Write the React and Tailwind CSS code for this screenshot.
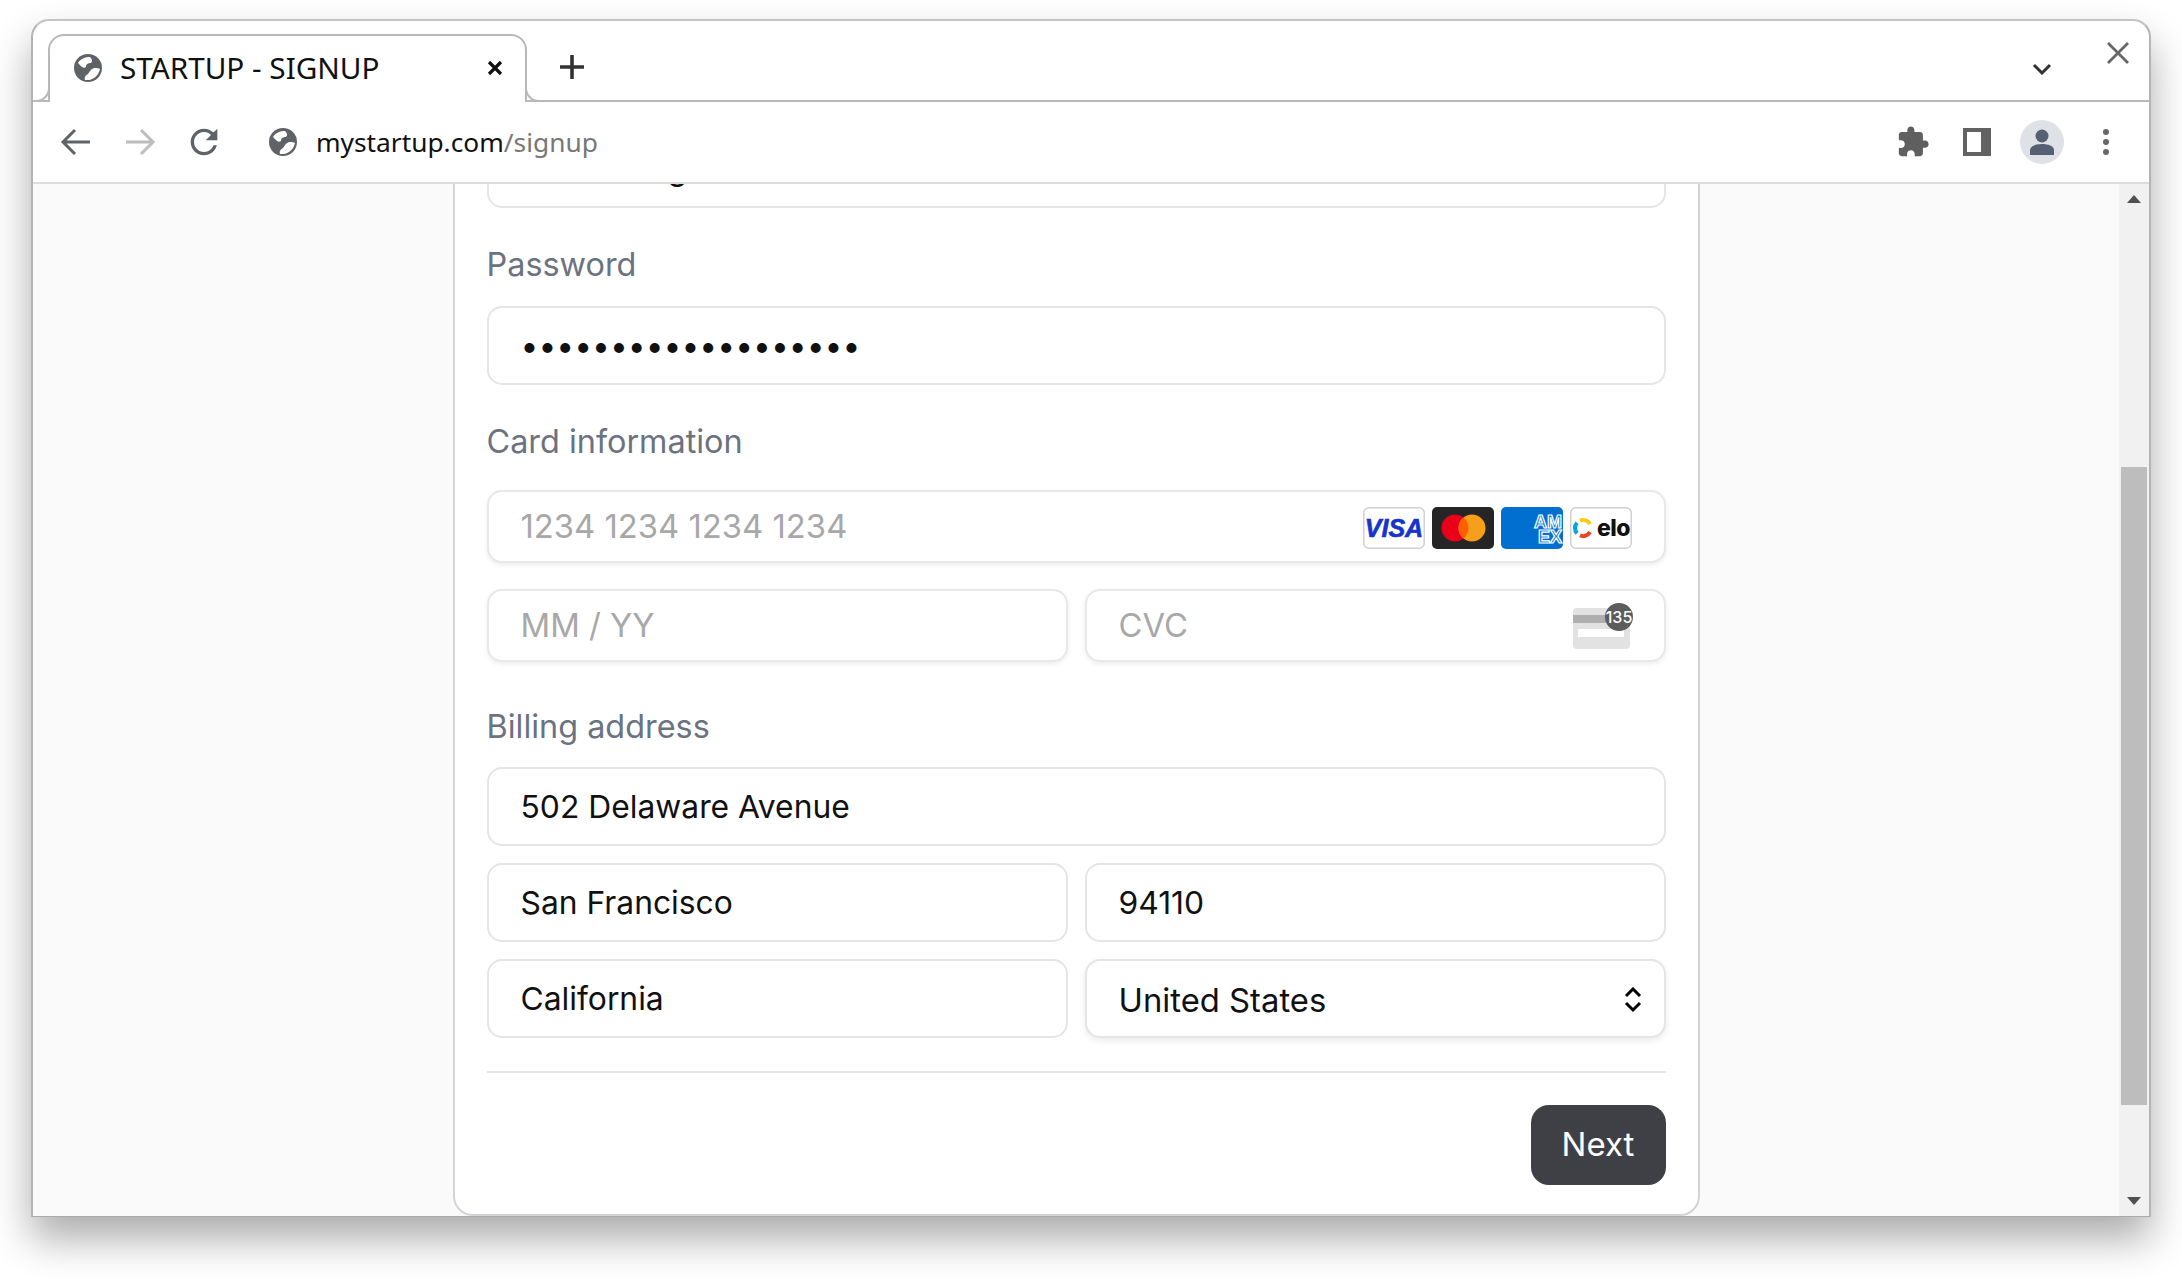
import React from 'react';

const inputClass =
  'block w-full h-[79px] px-[32px] bg-white border-2 border-[#e5e5e5] rounded-[15px] text-[31.8px] text-[#111] outline-none';
const stripeClass =
  'block w-full h-[73px] px-[32px] pb-[2px] bg-white border-2 border-[#e8e8e8] rounded-[15px] text-[32.8px] text-[#111] placeholder:text-[#a8a8a8] outline-none shadow-[0_2px_5px_rgba(0,0,0,0.08)]';
const labelClass = 'block h-[44px] leading-[44px] text-[32.4px] text-[#6b7280]';

const Globe = () => (
  <svg width="28" height="28" viewBox="0 0 28 28">
    <circle cx="14" cy="14" r="14" fill="#5f6368" />
    <path d="M4 9 C7 4 12 3 16 3 C18 5 19 7 17 9 C14 9 12 10 12 13 C9 15 7 12 4 9 Z" fill="#fff" />
    <path d="M11 26 C10 23 12 21 14 20 C16 17 17 15 20 14 C23 14 25 14 26 15 C25 20 21 25 15 26 C13 26 12 26 11 26 Z" fill="#fff" />
  </svg>
);

const VisaIcon = () => (
  <svg width="62" height="42" viewBox="0 0 62 42">
    <rect x="0.75" y="0.75" width="60.5" height="40.5" rx="5" fill="#fff" stroke="#d0d0d0" strokeWidth="1.5" />
    <text x="31" y="30" textAnchor="middle" fontFamily="Liberation Sans, sans-serif" fontSize="25" fontWeight="700" fontStyle="italic" fill="#1434cb" stroke="#1434cb" strokeWidth="0.6">VISA</text>
  </svg>
);

const MasterIcon = () => (
  <svg width="62" height="42" viewBox="0 0 62 42">
    <rect width="62" height="42" rx="5" fill="#252525" />
    <circle cx="23" cy="21" r="13.5" fill="#eb001b" />
    <circle cx="40" cy="21" r="13.5" fill="#f79e1b" />
    <path d="M31.5 10.5 A13.5 13.5 0 0 1 31.5 31.5 A13.5 13.5 0 0 1 31.5 10.5 Z" fill="#ff5f00" />
  </svg>
);

const AmexIcon = () => (
  <svg width="62" height="42" viewBox="0 0 62 42">
    <rect width="62" height="42" rx="5" fill="#016fd0" />
    <text fontFamily="Liberation Sans, sans-serif" fontSize="18" fontWeight="700" fill="#016fd0" stroke="#fff" strokeWidth="1.2">
      <tspan x="33" y="21">AM</tspan>
      <tspan x="37" y="36">EX</tspan>
    </text>
  </svg>
);

const EloIcon = () => (
  <svg width="62" height="42" viewBox="0 0 62 42">
    <rect x="0.75" y="0.75" width="60.5" height="40.5" rx="5" fill="#fff" stroke="#d0d0d0" strokeWidth="1.5" />
    <path d="M7 15.7 A8 8 0 0 0 7 26.3" fill="none" stroke="#00a4e0" strokeWidth="4" />
    <path d="M10 13.6 A8 8 0 0 1 20 17" fill="none" stroke="#ffcb05" strokeWidth="4" />
    <path d="M20 25 A8 8 0 0 1 10 28.4" fill="none" stroke="#ef4123" strokeWidth="4" />
    <text x="27" y="29" fontFamily="Inter, sans-serif" fontSize="23" fontWeight="800" letterSpacing="-0.5" fill="#111">elo</text>
  </svg>
);

const CvcIcon = () => (
  <svg width="62" height="48" viewBox="0 0 62 48">
    <rect x="2" y="6" width="57" height="41" rx="4" fill="#e2e2e2" />
    <rect x="2" y="13" width="57" height="8" fill="#aeaeae" />
    <rect x="7" y="27" width="46" height="8" rx="1" fill="#fff" />
    <circle cx="48" cy="15" r="14" fill="#5c5c5c" />
    <text x="48" y="21" textAnchor="middle" fontFamily="Inter, sans-serif" fontSize="16" fontWeight="500" fill="#fff">135</text>
  </svg>
);

export default function App() {
  return (
    <div className="w-[2182px] h-[1279px] bg-white pl-[31px] pt-[19px] overflow-hidden font-['Inter',sans-serif]">
      <div className="w-[2120px] h-[1198px] flex flex-col bg-white border-2 border-b-[1.5px] border-[#c4c4c4] border-b-[#aaa] border-l-[#b4b4b4] border-r-[#b4b4b4] rounded-t-[18px] overflow-hidden shadow-[0_22px_40px_rgba(0,0,0,0.33)]">
        {/* tab strip */}
        <div className="h-[81px] shrink-0 flex items-end border-b-2 border-[#b8b8b8] pl-[15px] font-['Noto_Sans',sans-serif]">
          <div className="relative w-[479px] h-[68px] -mb-[2px] bg-white border-2 border-b-0 border-[#b8b8b8] rounded-t-[16px] flex items-center pl-[24px] pb-[2px]">
            <span className="absolute -left-[16px] bottom-0 w-[16px] h-[14px] border-b-2 border-r-2 border-[#b8b8b8] rounded-br-[14px]" />
            <span className="absolute -right-[16px] bottom-0 w-[16px] h-[14px] border-b-2 border-l-2 border-[#b8b8b8] rounded-bl-[14px]" />
            <Globe />
            <span className="ml-[18px] text-[29.7px] text-[#111] whitespace-nowrap">STARTUP - SIGNUP</span>
            <svg className="ml-auto mr-[22px]" width="16" height="16" viewBox="0 0 16 16">
              <path d="M2 2 L14 14 M14 2 L2 14" stroke="#111" strokeWidth="3.2" />
            </svg>
          </div>
          <svg className="ml-[32px] mb-[20px]" width="26" height="26" viewBox="0 0 26 26">
            <path d="M13 1 V25 M1 13 H25" stroke="#333" strokeWidth="3.6" />
          </svg>
          <div className="ml-auto flex items-center self-stretch">
            <svg className="mt-[16px]" width="20" height="12" viewBox="0 0 20 12">
              <path d="M2 2 L10 10 L18 2" fill="none" stroke="#333" strokeWidth="3" />
            </svg>
            <svg className="ml-[54px] mr-[19px] -mt-[16px]" width="24" height="24" viewBox="0 0 24 24">
              <path d="M2 2 L22 22 M22 2 L2 22" stroke="#666" strokeWidth="2.8" />
            </svg>
          </div>
        </div>

        {/* toolbar */}
        <div className="h-[82px] shrink-0 flex items-center border-b-2 border-[#dcdcdc] font-['Noto_Sans',sans-serif] pl-[27px] pr-[40px]">
          <svg width="32" height="28" viewBox="0 0 32 28">
            <path d="M30 14 H4 M15 2 L3 14 L15 26" fill="none" stroke="#5f6368" strokeWidth="3" />
          </svg>
          <svg className="ml-[32px]" width="32" height="28" viewBox="0 0 32 28">
            <path d="M2 14 H28 M17 2 L29 14 L17 26" fill="none" stroke="#bdbdbd" strokeWidth="3" />
          </svg>
          <svg className="ml-[28px]" width="40" height="40" viewBox="0 0 24 24">
            <path fill="#5f6368" d="M17.65 6.35A7.958 7.958 0 0 0 12 4c-4.42 0-7.99 3.58-7.99 8s3.57 8 7.99 8c3.73 0 6.84-2.55 7.73-6h-2.08A5.99 5.99 0 0 1 12 18c-3.31 0-6-2.69-6-6s2.69-6 6-6c1.66 0 3.14.69 4.22 1.78L13 11h7V4l-2.35 2.35z" />
          </svg>
          <span className="ml-[45px] flex"><Globe /></span>
          <span className="ml-[19px] mt-[2px] text-[26.3px] text-[#111] whitespace-nowrap">
            mystartup.com<span className="text-[#777]">/signup</span>
          </span>
          <div className="ml-auto flex items-center">
            <svg width="34" height="34" viewBox="0 0 24 24">
              <path fill="#5f5f5f" d="M20.5 11H19V7c0-1.1-.9-2-2-2h-4V3.5C13 2.12 11.88 1 10.5 1S8 2.12 8 3.5V5H4c-1.1 0-1.99.9-1.99 2v3.8H3.5c1.49 0 2.7 1.21 2.7 2.7s-1.21 2.7-2.7 2.7H2V20c0 1.1.9 2 2 2h3.8v-1.5c0-1.49 1.21-2.7 2.7-2.7 1.49 0 2.7 1.21 2.7 2.7V22H17c1.1 0 2-.9 2-2v-4h1.5c1.38 0 2.5-1.12 2.5-2.5S21.88 11 20.5 11z" />
            </svg>
            <div className="ml-[33px] w-[28px] h-[28px] border-4 border-r-[10px] border-[#626262] bg-white" />
            <div className="ml-[29px] w-[44px] h-[44px] rounded-full bg-[#dee1e6] flex items-center justify-center">
              <svg width="26" height="26" viewBox="0 0 26 26">
                <circle cx="13" cy="7" r="6.5" fill="#566074" />
                <path d="M1 26 V21 C1 17 7 15 13 15 C19 15 25 17 25 21 V26 Z" fill="#566074" />
              </svg>
            </div>
            <div className="ml-[39px] flex flex-col gap-[4px]">
              <span className="w-[6px] h-[6px] rounded-full bg-[#666]" />
              <span className="w-[6px] h-[6px] rounded-full bg-[#666]" />
              <span className="w-[6px] h-[6px] rounded-full bg-[#666]" />
            </div>
          </div>
        </div>

        {/* page, scrolled to the bottom */}
        <div className="flex-1 min-h-0 flex bg-[#fafafa]">
          <div className="flex-1 min-h-0 flex justify-center items-end overflow-hidden">
            <div className="w-[1247px] shrink-0 bg-white border-2 border-[#d4d4d8] rounded-[20px] rounded-t-none px-[32px] pb-[29px]">
              <input className={inputClass} defaultValue="Bob Huang" readOnly />

              <label className={`${labelClass} mt-[35px] mb-[19px]`}>Password</label>
              <input className={inputClass} type="password" defaultValue="sunnyd4ys-forever19" readOnly />

              <label className={`${labelClass} mt-[35px] mb-[26px]`}>Card information</label>
              <div className="relative">
                <input className={stripeClass} placeholder="1234 1234 1234 1234" readOnly />
                <div className="absolute right-[34px] top-[17px] flex gap-[7px]">
                  <VisaIcon />
                  <MasterIcon />
                  <AmexIcon />
                  <EloIcon />
                </div>
              </div>
              <div className="grid grid-cols-2 gap-[17px] mt-[26px]">
                <input className={stripeClass} placeholder="MM / YY" readOnly />
                <div className="relative">
                  <input className={stripeClass} placeholder="CVC" readOnly />
                  <div className="absolute right-[33px] top-[13px]">
                    <CvcIcon />
                  </div>
                </div>
              </div>

              <label className={`${labelClass} mt-[43px] mb-[18px]`}>Billing address</label>
              <div className="flex flex-col gap-[17px]">
                <input className={inputClass} defaultValue="502 Delaware Avenue" readOnly />
                <div className="grid grid-cols-2 gap-[17px]">
                  <input className={inputClass} defaultValue="San Francisco" readOnly />
                  <input className={inputClass} defaultValue="94110" readOnly />
                </div>
                <div className="grid grid-cols-2 gap-[17px]">
                  <input className={inputClass} defaultValue="California" readOnly />
                  <div className="relative">
                    <select className={`${inputClass} appearance-none pt-[4px] text-[32.8px] shadow-[0_3px_6px_rgba(0,0,0,0.08)]`} defaultValue="United States">
                      <option>United States</option>
                    </select>
                    <svg className="absolute right-[24px] top-[28px]" width="18" height="26" viewBox="0 0 18 26">
                      <path d="M2 9 L9 2 L16 9 M2 16 L9 23 L16 16" fill="none" stroke="#000" strokeWidth="3" />
                    </svg>
                  </div>
                </div>
              </div>

              <div className="h-[2px] bg-[#e5e5e5] mt-[33px] mb-[32px]" />
              <div className="flex justify-end">
                <button className="w-[135px] h-[80px] rounded-[18px] bg-[#3f3f46] text-white text-[33px]">Next</button>
              </div>
            </div>
          </div>

          {/* scrollbar */}
          <div className="w-[30px] shrink-0 bg-[#f1f1f1] flex flex-col items-center pt-[11px] pb-[11px]">
            <svg width="14" height="8" viewBox="0 0 14 8"><path d="M7 0 L14 8 H0 Z" fill="#505050" /></svg>
            <div className="w-[26px] h-[638px] bg-[#bdbdbd] mt-[264px]" />
            <svg className="mt-auto" width="14" height="8" viewBox="0 0 14 8"><path d="M0 0 H14 L7 8 Z" fill="#505050" /></svg>
          </div>
        </div>
      </div>
    </div>
  );
}
